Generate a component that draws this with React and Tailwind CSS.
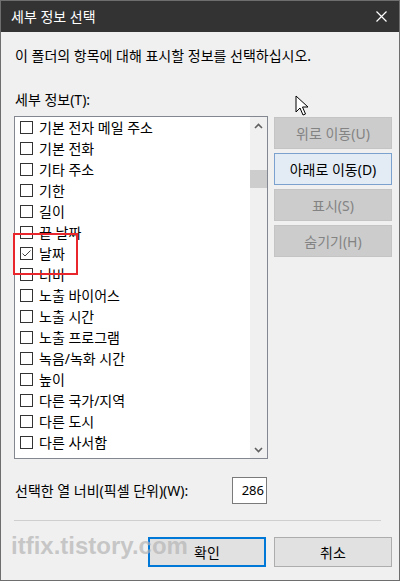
import React from 'react';

const items = [
  { label: '기본 전자 메일 주소' },
  { label: '기본 전화' },
  { label: '기타 주소' },
  { label: '기한' },
  { label: '길이' },
  { label: '끝 날짜' },
  { label: '날짜', checked: true },
  { label: '너비' },
  { label: '노출 바이어스' },
  { label: '노출 시간' },
  { label: '노출 프로그램' },
  { label: '녹음/녹화 시간' },
  { label: '높이' },
  { label: '다른 국가/지역' },
  { label: '다른 도시' },
  { label: '다른 사서함' },
];

const Checkbox = ({ checked }) => (
  <div className="w-[13px] h-[13px] border border-[#333333] bg-white flex items-center justify-center shrink-0">
    {checked && (
      <svg width="11" height="11" viewBox="0 0 11 11">
        <path d="M1.5 5.5 L4 8 L9.5 2.5" fill="none" stroke="#444" strokeWidth="1" />
      </svg>
    )}
  </div>
);

const SideButton = ({ label, active }) => (
  <button
    className={`w-[118px] h-[32px] text-[14px] border ${
      active
        ? 'bg-[#e3ecf5] border-[#7ba2cf] text-black'
        : 'bg-[#cccccc] border-[#c4c4c4] text-[#838383]'
    }`}
  >
    {label}
  </button>
);

const App = () => {
  return (
    <div className="w-[400px] h-[581px] relative bg-[#f0f0f0] border border-[#6e6e6e] font-['Noto_Sans','Noto_Sans_CJK_KR',sans-serif] text-black overflow-hidden">
      {/* Title bar */}
      <div className="h-[31px] bg-[#333333] flex items-center justify-between pl-[10px] pr-[12px]">
        <span className="text-white text-[14px]">세부 정보 선택</span>
        <svg width="11" height="11" viewBox="0 0 11 11">
          <path d="M0.5 0.5 L10.5 10.5 M10.5 0.5 L0.5 10.5" stroke="#ffffff" strokeWidth="1.2" />
        </svg>
      </div>

      {/* Body */}
      <div className="pl-[13px] pr-[7px]">
        <p className="mt-[15px] text-[14px] leading-[18px] pl-[1px]">
          이 폴더의 항목에 대해 표시할 정보를 선택하십시오.
        </p>
        <p className="mt-[26px] text-[14px] leading-[18px] pl-[1px]">세부 정보(T):</p>

        <div className="mt-[7px] flex gap-[6px]">
          {/* List */}
          <div className="w-[254px] h-[343px] border border-[#828790] bg-white flex">
            <div className="flex-1 pl-[5px] pt-0 overflow-hidden">
              {items.map((item, i) => (
                <div key={i} className="h-[21px] flex items-center gap-[6px]">
                  <Checkbox checked={item.checked} />
                  <span className="text-[14px] leading-[18px] whitespace-nowrap">{item.label}</span>
                </div>
              ))}
            </div>
            {/* Scrollbar */}
            <div className="w-[17px] bg-[#f0f0f0] flex flex-col">
              <div className="h-[17px] flex items-center justify-center">
                <svg width="9" height="6" viewBox="0 0 9 6">
                  <path d="M1 5 L4.5 1.5 L8 5" fill="none" stroke="#606060" strokeWidth="1.6" />
                </svg>
              </div>
              <div className="mt-[36px] h-[18px] bg-[#cdcdcd]" />
              <div className="flex-1" />
              <div className="h-[17px] flex items-center justify-center">
                <svg width="9" height="6" viewBox="0 0 9 6">
                  <path d="M1 1 L4.5 4.5 L8 1" fill="none" stroke="#606060" strokeWidth="1.6" />
                </svg>
              </div>
            </div>
          </div>

          {/* Side buttons */}
          <div className="flex flex-col gap-[4px] pt-[1px]">
            <SideButton label="위로 이동(U)" />
            <SideButton label="아래로 이동(D)" active />
            <SideButton label="표시(S)" />
            <SideButton label="숨기기(H)" />
          </div>
        </div>

        {/* Width row */}
        <div className="mt-[18px] flex items-center pl-[1px]">
          <span className="text-[14px] w-[217px]">선택한 열 너비(픽셀 단위)(W):</span>
          <div className="w-[35px] h-[27px] bg-white border border-[#7a7a7a] flex items-center justify-end pr-[2px] text-[13px]">
            286
          </div>
        </div>

        <div className="mt-[16px] mr-[11px] h-px bg-[#cfcfcf]" />

        {/* Footer buttons */}
        <div className="mt-[16px] flex justify-end gap-[8px]">
          <button className="w-[118px] h-[30px] bg-[#e1e1e1] border-2 border-[#0078d7] text-[14px]">확인</button>
          <button className="w-[118px] h-[30px] bg-[#e1e1e1] border border-[#adadad] text-[14px]">취소</button>
        </div>
      </div>

      {/* Red highlight annotation */}
      <div className="absolute left-[12px] top-[232px] w-[65px] h-[42px] border-2 border-[#e8262c]" />

      {/* Mouse cursor */}
      <svg className="absolute left-[294px] top-[94px]" width="14" height="22" viewBox="0 0 14 22">
        <path d="M1 1 L1 17 L5 13 L8 20 L10.5 19 L7.5 12 L13 12 Z" fill="#ffffff" stroke="#000000" strokeWidth="1" />
      </svg>

      {/* Watermark */}
      <div className="absolute left-[10px] top-[530px] text-[24px] font-bold leading-[30px] text-[#b4b4b4]/70 font-['Liberation_Sans',sans-serif] pointer-events-none">
        itfix.tistory.com
      </div>
    </div>
  );
};

export default App;
